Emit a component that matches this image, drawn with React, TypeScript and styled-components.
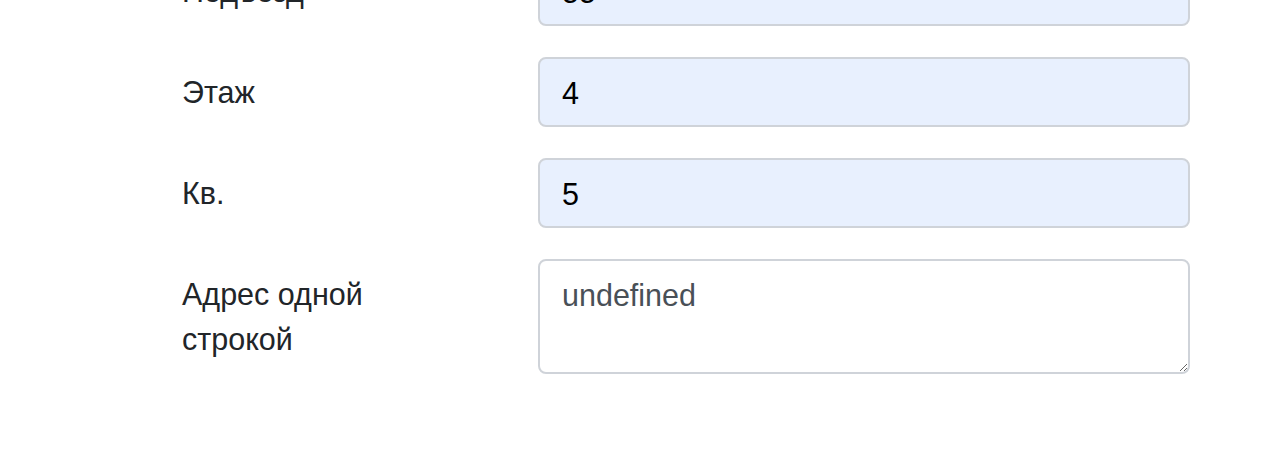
import React from "react";
import styled, { createGlobalStyle } from "styled-components";

const GlobalStyle = createGlobalStyle`
  html, body {
    margin: 0;
    background: #fff;
  }
  body {
    font-family: "Liberation Sans", Arial, sans-serif;
    color: #212529;
  }
`;

interface Field {
  label: string;
  value: string;
  multiline?: boolean;
}

const fields: Field[] = [
  { label: "Подъезд", value: "55" },
  { label: "Этаж", value: "4" },
  { label: "Кв.", value: "5" },
  { label: "Адрес одной строкой", value: "undefined", multiline: true },
];

export default function App() {
  return (
    <>
      <GlobalStyle />
      <Form>
        {fields.map((f) => (
          <Row key={f.label}>
            <Label>{f.label}</Label>
            {f.multiline ? (
              <TextArea rows={2} defaultValue={f.value} />
            ) : (
              <Input type="text" defaultValue={f.value} />
            )}
          </Row>
        ))}
      </Form>
    </>
  );
}

const Form = styled.form`
  margin-top: -44px;
  padding: 0 90px 0 182px;
  font-size: 30px;
  line-height: 45px;
`;

const Row = styled.div`
  display: grid;
  grid-template-columns: 270px 652px;
  column-gap: 86px;
  margin-bottom: 31px;
`;

const Label = styled.label`
  padding-top: 13px;
  font-size: 30.5px;
  line-height: 45px;
  color: #212529;
`;

const Input = styled.input`
  box-sizing: border-box;
  width: 100%;
  height: 70px;
  padding: 12px 22px 10px;
  border: 2px solid #cfd3d9;
  border-radius: 8px;
  background: #e8f0fe;
  color: #000;
  font-family: "Liberation Sans", Arial, sans-serif;
  font-size: 30.5px;
  line-height: 45px;
  outline: none;
`;

const TextArea = styled.textarea`
  box-sizing: border-box;
  width: 100%;
  height: 115px;
  padding: 12px 22px 10px;
  border: 2px solid #cfd3d9;
  border-radius: 8px;
  background: #fff;
  color: #495057;
  font-family: "Liberation Sans", Arial, sans-serif;
  font-size: 30.5px;
  line-height: 45px;
  outline: none;
  resize: vertical;
  display: block;
`;
